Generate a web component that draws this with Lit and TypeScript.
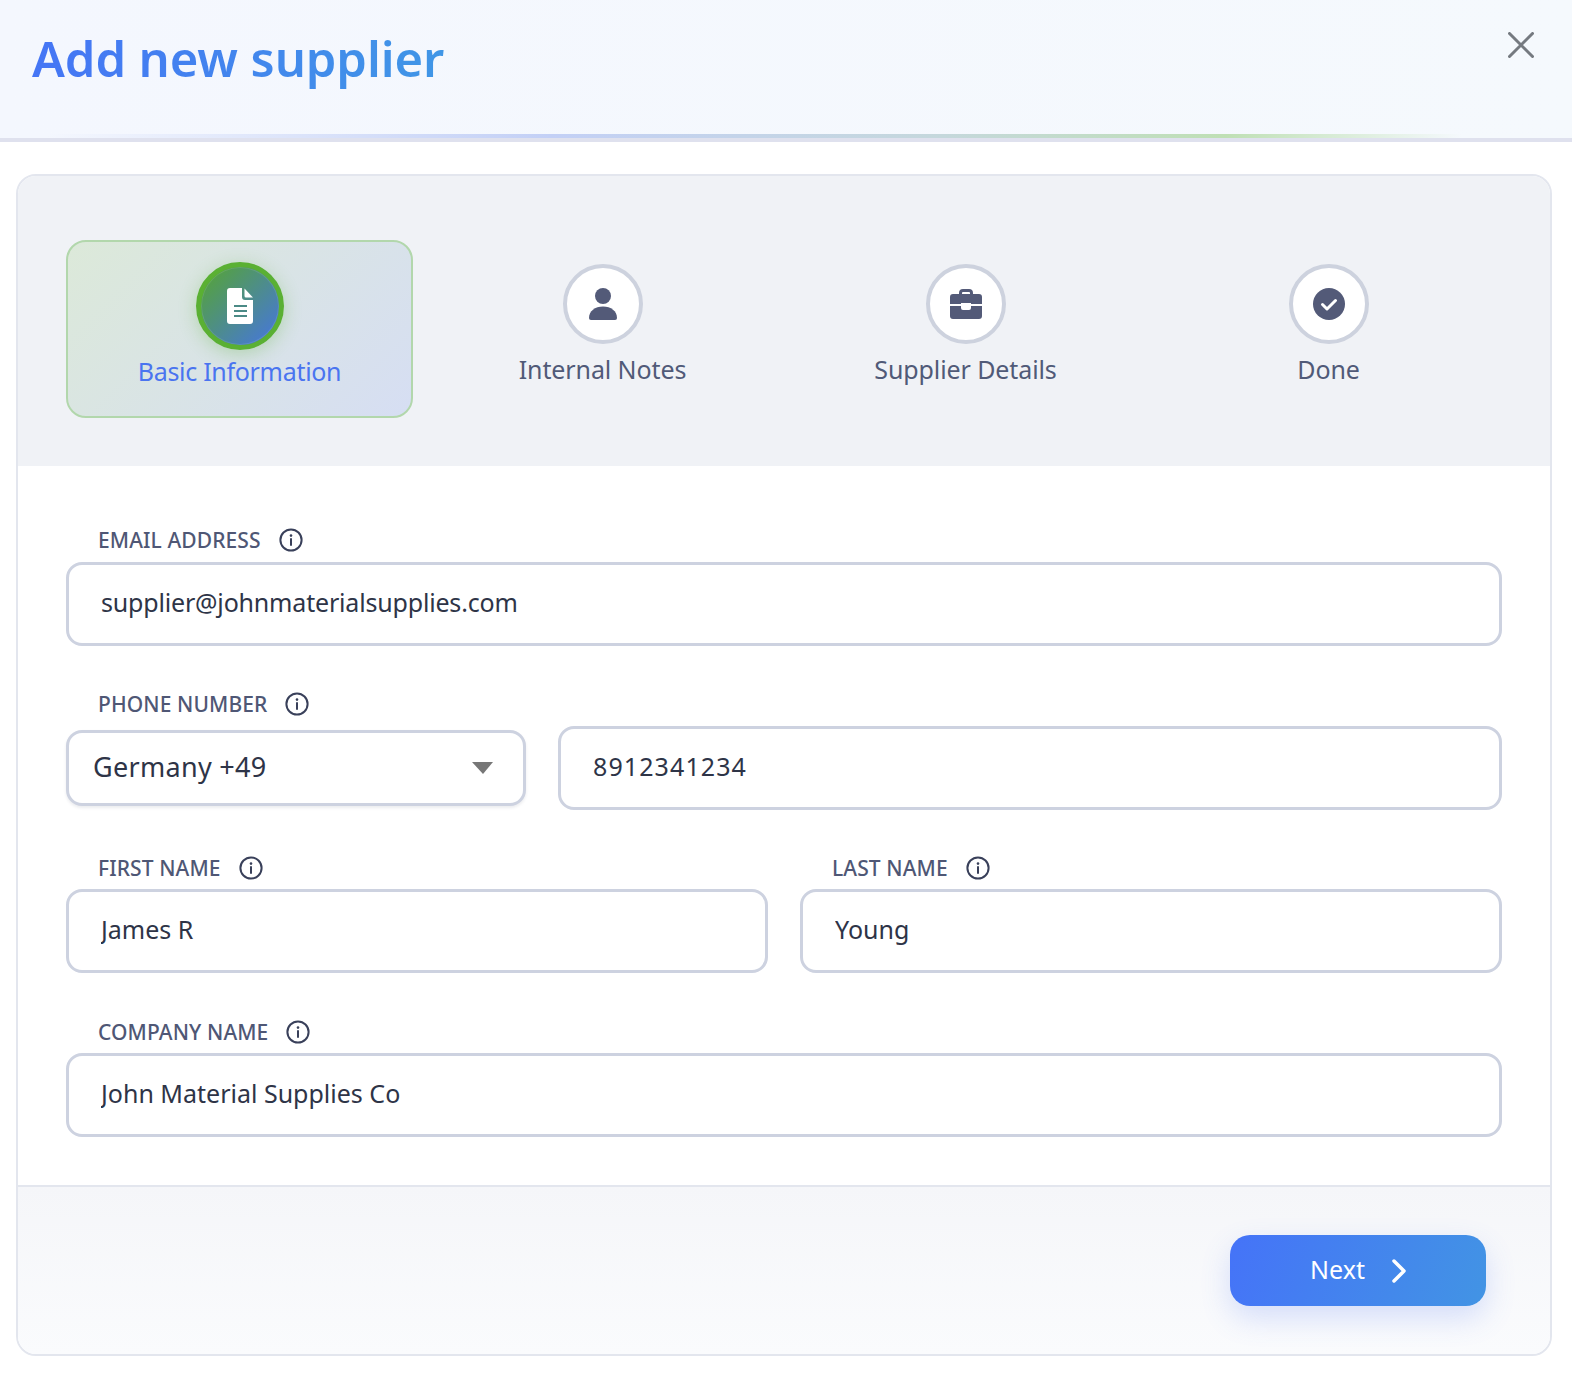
import { LitElement, html, css, svg } from 'lit';
import { customElement } from 'lit/decorators.js';
import { classMap } from 'lit/directives/class-map.js';

const infoIcon = html`<svg class="info" viewBox="0 0 24 24" fill="none" stroke="#39405a" stroke-width="2">
  <circle cx="12" cy="12" r="10.6"></circle>
  <path d="M12 11v6" stroke-linecap="round"></path>
  <circle cx="12" cy="7.6" r="1.3" fill="#39405a" stroke="none"></circle>
</svg>`;

const docIcon = svg`<svg width="26" height="36" viewBox="0 0 26 36">
  <path fill="#fff" d="M3 0h12v9a3 3 0 0 0 3 3h8v21a3 3 0 0 1-3 3H3a3 3 0 0 1-3-3V3a3 3 0 0 1 3-3z"></path>
  <path fill="#fff" d="M17.5 0.5 26 9.5h-7a1.5 1.5 0 0 1-1.5-1.5z"></path>
  <path stroke="#4b8a86" stroke-width="2" d="M7 18h13M7 23h13M7 28h13"></path>
</svg>`;

const userIcon = svg`<svg width="28" height="32" viewBox="0 0 28 32" fill="#535a78">
  <circle cx="14" cy="8" r="8"></circle>
  <path d="M0 30c0-7 6-11.500 14-11.500S28 23 28 30a2 2 0 0 1-2 2H2a2 2 0 0 1-2-2z"></path>
</svg>`;

const caseIcon = svg`<svg width="32" height="30" viewBox="0 0 32 30" fill="#535a78">
  <path fill-rule="evenodd" d="M9 6V4a4 4 0 0 1 4-4h6a4 4 0 0 1 4 4v2h-3V4a1 1 0 0 0-1-1h-6a1 1 0 0 0-1 1v2z"></path>
  <path d="M3 5h26a3 3 0 0 1 3 3v7H21v-1h-10v1H0V8a3 3 0 0 1 3-3z"></path>
  <path d="M0 17h11v2a2 2 0 0 0 2 2h6a2 2 0 0 0 2-2v-2h11v10a3 3 0 0 1-3 3H3a3 3 0 0 1-3-3z"></path>
</svg>`;

const doneIcon = svg`<svg width="32" height="32" viewBox="0 0 32 32">
  <circle cx="16" cy="16" r="16" fill="#535a78"></circle>
  <path d="M9.500 16.500l4.500 4.500 8.500-8.500" fill="none" stroke="#fff" stroke-width="3" stroke-linecap="round" stroke-linejoin="round"></path>
</svg>`;

const steps = [
  { label: 'Basic Information', icon: docIcon, active: true },
  { label: 'Internal Notes', icon: userIcon, active: false },
  { label: 'Supplier Details', icon: caseIcon, active: false },
  { label: 'Done', icon: doneIcon, active: false },
];

@customElement('app-root')
export class AppRoot extends LitElement {
  static styles = css`
    :host {
      display: block;
      height: 1378px;
      background: #fff;
      font-family: 'Noto Sans', 'Lato', sans-serif;
      color: #2e3447;
    }

    .header {
      display: flex;
      justify-content: space-between;
      align-items: flex-start;
      height: 134px;
      box-sizing: border-box;
      padding: 25px 38px 0 32px;
      background: linear-gradient(90deg, #f4f7fe, #f5f9fd);
    }

    .title {
      margin: 0;
      font-size: 49px;
      line-height: 66px;
      font-weight: 600;
      letter-spacing: -0.1px;
      background: linear-gradient(90deg, #4575f5, #4096e6);
      -webkit-background-clip: text;
      background-clip: text;
      color: transparent;
    }

    .close {
      margin-top: 7px;
      width: 26px;
      height: 26px;
      padding: 0;
      border: 0;
      background: none;
    }

    .glow {
      height: 4px;
      background: linear-gradient(90deg, #f4f7fe 3%, #c3d0f6 35%, #c5d8dc 60%, #bfe0b5 78%, #f5f9fd 93%);
    }

    .rule {
      height: 4px;
      background: #dfe1ee;
    }

    .card {
      margin: 32px 20px 0 16px;
      border: 2px solid #e3e6ee;
      border-radius: 20px;
      overflow: hidden;
    }

    .steps {
      display: grid;
      grid-template-columns: repeat(4, 1fr);
      gap: 16px;
      padding: 64px 48px 48px;
      background: #f0f2f6;
    }

    .step {
      display: flex;
      flex-direction: column;
      align-items: center;
      height: 178px;
      box-sizing: border-box;
      padding-top: 24px;
      border-radius: 20px;
    }

    .step.active {
      padding-top: 20px;
      border: 2px solid #b2d7ac;
      background: linear-gradient(135deg, #dce9d9, #d6def3);
    }

    .bubble {
      display: flex;
      align-items: center;
      justify-content: center;
      box-sizing: border-box;
      width: 80px;
      height: 80px;
      border: 4px solid #cdd2de;
      border-radius: 50%;
      background: #fff;
    }

    .active .bubble {
      width: 88px;
      height: 88px;
      border: 5px solid #5ab033;
      background: linear-gradient(135deg, #56a62f, #4574e4);
      box-shadow: 0 4px 18px rgba(90, 176, 51, 0.3), inset 0 0 0 1px rgba(255, 255, 255, 0.1);
    }

    .step-label {
      margin-top: 7px;
      font-size: 25px;
      line-height: 36px;
      letter-spacing: -0.1px;
      color: #505a78;
    }

    .active .step-label {
      margin-top: 3px;
      letter-spacing: -0.3px;
      color: #4a74f0;
    }

    .form {
      display: flex;
      flex-direction: column;
      gap: 42px;
      padding: 58px 48px 48px;
    }

    .field {
      display: flex;
      flex-direction: column;
      gap: 6px;
      min-width: 0;
    }

    .field.tight {
      gap: 5px;
    }

    .label {
      display: flex;
      align-items: center;
      gap: 18px;
      padding-left: 32px;
      height: 32px;
      font-size: 21px;
      font-weight: 500;
      letter-spacing: 0.1px;
      color: #4f5775;
    }

    .info {
      width: 24px;
      height: 24px;
    }

    input {
      box-sizing: border-box;
      width: 100%;
      height: 84px;
      padding: 0 32px 4px;
      border: 3px solid #cdd2e0;
      border-radius: 16px;
      outline: none;
      background: #fff;
      font: inherit;
      font-size: 25px;
      color: #2e3447;
    }

    input.email {
      letter-spacing: -0.18px;
    }

    input.number {
      letter-spacing: 1.1px;
    }

    .phone {
      display: grid;
      grid-template-columns: 460px 1fr;
      gap: 32px;
      align-items: center;
    }

    .select {
      display: flex;
      align-items: center;
      justify-content: space-between;
      box-sizing: border-box;
      height: 76px;
      padding: 0 30px 3px 24px;
      border: 3px solid #cdd2e0;
      border-radius: 16px;
      background: #fff;
      box-shadow: 0 2px 3px rgba(60, 70, 100, 0.1);
      font-size: 27px;
      letter-spacing: 0.3px;
      color: #2e3447;
    }

    .arrow {
      width: 21px;
      height: 12px;
      margin-top: 3px;
    }

    .names {
      display: grid;
      grid-template-columns: 1fr 1fr;
      gap: 32px;
      margin-bottom: 1px;
    }

    .footer {
      display: flex;
      justify-content: flex-end;
      padding: 48px 64px 48px;
      border-top: 2px solid #e3e6ee;
      background: linear-gradient(180deg, #f5f6f9, #fafbfd);
    }

    .next {
      display: flex;
      align-items: center;
      justify-content: center;
      gap: 27px;
      width: 256px;
      height: 71px;
      border: 0;
      border-radius: 20px;
      background: linear-gradient(110deg, #4573f8, #4294e4);
      box-shadow: 0 12px 30px rgba(70, 110, 240, 0.2);
      font: inherit;
      font-size: 25px;
      color: #fff;
    }

    .next span {
      padding-bottom: 4px;
    }
  `;

  field(label: string, value: string, tight = false, kind = '') {
    return html`<div class=${classMap({ field: true, tight })}>
      <div class="label">${label} ${infoIcon}</div>
      <input class=${kind} value=${value} />
    </div>`;
  }

  render() {
    return html`
      <header class="header">
        <h1 class="title">Add new supplier</h1>
        <button class="close">
          <svg width="26" height="26" viewBox="0 0 26 26" stroke="#757a80" stroke-width="3" stroke-linecap="round">
            <path d="M1.500 1.500l23 23M24.500 1.500l-23 23"></path>
          </svg>
        </button>
      </header>
      <div class="glow"></div>
      <div class="rule"></div>

      <section class="card">
        <div class="steps">
          ${steps.map(
            (s) => html`<div class=${classMap({ step: true, active: s.active })}>
              <div class="bubble">${s.icon}</div>
              <div class="step-label">${s.label}</div>
            </div>`,
          )}
        </div>

        <div class="form">
          ${this.field('EMAIL ADDRESS', 'supplier@johnmaterialsupplies.com', false, 'email')}

          <div class="field">
            <div class="label">PHONE NUMBER ${infoIcon}</div>
            <div class="phone">
              <div class="select">
                <span>Germany +49</span>
                <svg class="arrow" viewBox="0 0 21 12"><path d="M0 0h21L11 12z" fill="#777"></path></svg>
              </div>
              <input class="number" value="8912341234" />
            </div>
          </div>

          <div class="names">
            ${this.field('FIRST NAME', 'James R', true)}
            ${this.field('LAST NAME', 'Young', true)}
          </div>

          ${this.field('COMPANY NAME', 'John Material Supplies Co', true)}
        </div>

        <div class="footer">
          <button class="next">
            <span>Next</span>
            <svg width="14" height="24" viewBox="0 0 14 24" fill="none" stroke="#fff" stroke-width="3.500" stroke-linecap="round" stroke-linejoin="round">
              <path d="M2 2l10 10L2 22"></path>
            </svg>
          </button>
        </div>
      </section>
    `;
  }
}
